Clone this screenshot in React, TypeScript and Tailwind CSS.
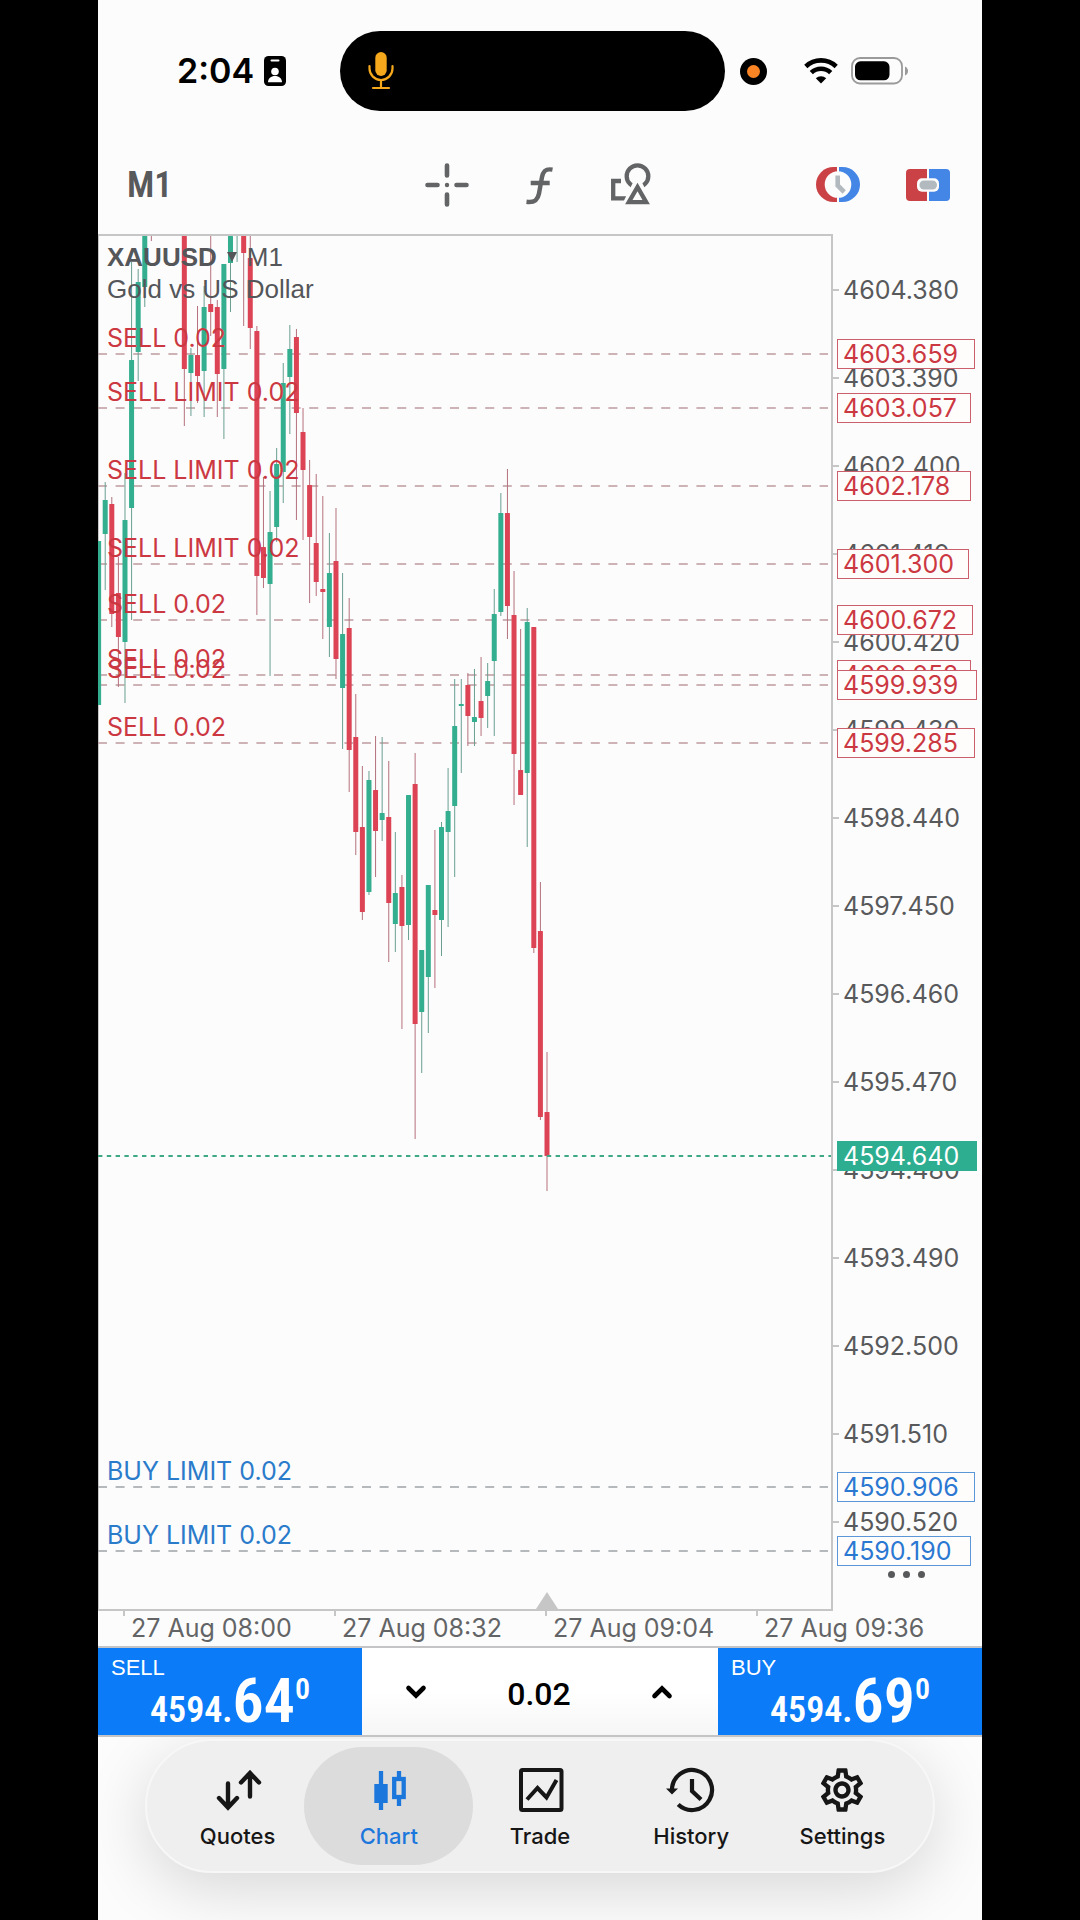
import { useState } from 'react';
import type { ReactNode } from 'react';
import { MdOutlineSettings } from 'react-icons/md';
import clsx from 'clsx';

type Candle = {
  high: number;
  top: number;
  bottom: number;
  low: number;
  up: boolean;
};

// bars from the newest to the oldest: [high, top, bottom, low, rising]
const rows: ([number, number, number, number, number] | null)[] = [
  [1052, 1112, 1156, 1191, 0],
  [882, 931, 1117, 1120, 0],
  [627, 627, 948, 953, 0],
  [608, 622, 773, 847, 1],
  [629, 770, 795, 795, 0],
  [571, 615, 754, 805, 0],
  [469, 513, 606, 639, 0],
  [493, 513, 612, 616, 1],
  [589, 614, 661, 736, 1],
  [663, 681, 696, 728, 1],
  [657, 701, 718, 736, 0],
  [669, 717, 722, 746, 1],
  [673, 685, 716, 746, 0],
  [679, 704, 706, 773, 1],
  [679, 726, 806, 877, 1],
  [768, 811, 832, 927, 1],
  [822, 827, 920, 956, 1],
  [830, 910, 915, 988, 0],
  [885, 885, 977, 1033, 1],
  [950, 950, 1012, 1073, 1],
  [753, 784, 1024, 1139, 0],
  [795, 795, 925, 940, 1],
  [875, 887, 926, 1029, 0],
  [832, 893, 924, 952, 1],
  [761, 817, 903, 962, 0],
  [737, 813, 820, 841, 1],
  [736, 790, 831, 877, 0],
  [771, 780, 892, 895, 1],
  [766, 827, 912, 920, 0],
  [694, 737, 832, 855, 0],
  [598, 628, 750, 792, 0],
  [573, 634, 688, 749, 1],
  [508, 561, 659, 679, 0],
  [533, 573, 627, 657, 1],
  [496, 589, 592, 639, 0],
  [474, 543, 582, 596, 0],
  [460, 485, 537, 603, 0],
  [408, 432, 470, 540, 0],
  [329, 337, 413, 520, 0],
  [325, 349, 377, 434, 1],
  [363, 383, 472, 503, 1],
  [448, 464, 527, 542, 1],
  [491, 532, 584, 676, 1],
  [477, 547, 578, 588, 0],
  [326, 331, 576, 615, 0],
  [236, 258, 328, 349, 0],
  [236, 236, 253, 326, 0],
  [236, 236, 236, 262, 1],
  [236, 236, 263, 312, 1],
  [264, 264, 369, 439, 1],
  [300, 307, 374, 417, 0],
  [236, 304, 312, 336, 0],
  [286, 307, 371, 417, 1],
  [306, 355, 376, 403, 0],
  [348, 355, 373, 416, 1],
  [236, 236, 369, 426, 0],
  null,
  null,
  null,
  null,
  [236, 236, 236, 241, 0],
  [236, 236, 287, 307, 1],
  [269, 282, 352, 381, 1],
  [262, 360, 508, 620, 1],
  [473, 520, 642, 703, 1],
  [557, 593, 637, 687, 0],
  [497, 504, 614, 627, 0],
  [482, 500, 534, 590, 1],
  [541, 541, 705, 705, 1],
];

const candles: (Candle | null)[] = rows.map(
  (r) => r && { high: r[0], top: r[1], bottom: r[2], low: r[3], up: r[4] === 1 }
);

const orders = [
  { price: 4603.659, label: 'SELL 0.02', side: 'sell', width: 137 },
  { price: 4603.057, label: 'SELL LIMIT 0.02', side: 'sell', width: 133 },
  { price: 4602.178, label: 'SELL LIMIT 0.02', side: 'sell', width: 133 },
  { price: 4601.3, label: 'SELL LIMIT 0.02', side: 'sell', width: 131 },
  { price: 4600.672, label: 'SELL 0.02', side: 'sell', width: 135 },
  { price: 4600.052, label: 'SELL 0.02', side: 'sell', width: 133 },
  { price: 4599.939, label: 'SELL 0.02', side: 'sell', width: 139 },
  { price: 4599.285, label: 'SELL 0.02', side: 'sell', width: 137 },
  { price: 4590.906, label: 'BUY LIMIT 0.02', side: 'buy', width: 137 },
  { price: 4590.19, label: 'BUY LIMIT 0.02', side: 'buy', width: 133 },
];

const gridPrices = Array.from({ length: 15 }, (_, i) => 4604.38 - i * 0.99);

const times = [
  { x: 124, label: '27 Aug 08:00' },
  { x: 335, label: '27 Aug 08:32' },
  { x: 546, label: '27 Aug 09:04' },
  { x: 757, label: '27 Aug 09:36' },
];

const LAST_PRICE = 4594.64;

const priceY = (price: number) => Math.round(290 + (4604.38 - price) * 88.87);
const candleX = (index: number) => 547 - index * 6.594;

const StatusBar = () => (
  <div className="grid grid-cols-[242fr_385fr_257fr] items-center pt-[31px] pb-6">
    <div className="flex items-center gap-2.5 pl-[79px]">
      <span className="text-[34px] leading-10 font-semibold text-black">2:04</span>
      <svg viewBox="0 0 22 30" className="h-[30px] w-[22px] shrink-0" aria-hidden="true">
        <rect width="22" height="30" rx="4.5" fill="#000" />
        <rect x="6.5" y="3.4" width="9" height="2.2" rx="1.1" fill="#fff" />
        <circle cx="11" cy="15.5" r="3.8" fill="#fff" />
        <path d="M4 26.3c0-4 3-6.3 7-6.3s7 2.3 7 6.3z" fill="#fff" />
      </svg>
    </div>
    <div className="flex h-20 items-center rounded-full bg-black pl-7">
      <svg viewBox="0 0 28 40" className="h-10 w-7" fill="none" stroke="#f5a81c" aria-hidden="true">
        <rect x="7.3" y="1" width="11.4" height="24" rx="5.7" fill="#f5a81c" stroke="none" />
        <path
          d="M1.5 15v2.5a11.5 11.5 0 0 0 23 0V15M13 29v7.5M5 37h16"
          strokeWidth="2.2"
          strokeLinecap="round"
        />
      </svg>
    </div>
    <div className="flex items-center pl-[15px]">
      <span className="flex size-[27px] items-center justify-center rounded-full bg-black">
        <span className="size-[13px] rounded-full bg-[#fb8524]" />
      </span>
      <svg
        viewBox="0 0 34 26"
        className="ml-[37px] h-[26px] w-[34px]"
        fill="none"
        stroke="#000"
        aria-hidden="true"
      >
        <path d="M1.8 8.5a22 22 0 0 1 30.4 0" strokeWidth="4.6" />
        <path d="M7.3 14.6a14 14 0 0 1 19.4 0" strokeWidth="4.6" />
        <path d="M11.8 20.2a7.6 7.6 0 0 1 10.4 0L17 25.5z" fill="#000" stroke="none" />
      </svg>
      <svg viewBox="0 0 58 28" className="ml-[13px] h-7 w-[58px]" aria-hidden="true">
        <rect x="1" y="1" width="50" height="25.5" rx="8" fill="none" stroke="#9a9a9a" strokeWidth="1.8" />
        <rect x="4" y="4.3" width="34.5" height="19" rx="5.5" fill="#000" />
        <path d="M54 9.5c2 1 3 2.5 3 4.5s-1 3.5-3 4.5z" fill="#9a9a9a" />
      </svg>
    </div>
  </div>
);

const Toolbar = () => (
  <div className="grid h-[99px] grid-cols-[1fr_auto_1fr] items-center pr-8 pl-[29px]">
    <button className="justify-self-start font-['Liberation_Sans_Narrow','Roboto_Condensed','Roboto',sans-serif] text-4xl font-semibold text-[#58595b]">
      M1
    </button>
    <div className="flex items-center gap-12 text-[#636466]">
      <button aria-label="Crosshair">
        <svg
          viewBox="0 0 44 44"
          className="size-11"
          stroke="currentColor"
          strokeWidth="4.6"
          strokeLinecap="round"
        >
          <path d="M22 2.5v10M22 31.5v10M2.5 22h10M31.5 22h10" />
          <circle cx="22" cy="22" r="2.2" fill="currentColor" stroke="none" />
        </svg>
      </button>
      <button aria-label="Indicators">
        <svg viewBox="0 0 44 44" className="size-11" fill="none" stroke="currentColor" strokeWidth="4.4">
          <path d="M35.5 6.6c-6.5-1.200-9.3 1-10.5 7.4l-3 16.5c-1.2 6.5-4.5 9.3-12.5 8.3M13.7 20h19" />
        </svg>
      </button>
      <button aria-label="Objects">
        <svg viewBox="0 0 44 44" className="size-11" fill="none" stroke="currentColor" strokeWidth="4.3">
          <path d="M12 18H4.2v17.3H17" />
          <circle cx="28.5" cy="13.2" r="10.8" />
          <path d="M28.5 15l-13 26h26z" fill="#fcfcfc" stroke="#fcfcfc" strokeWidth="4" />
          <path d="M28.5 24l-8.7 15.2h17.4z" />
        </svg>
      </button>
    </div>
    <div className="flex items-center gap-[46px] justify-self-end">
      <button aria-label="Tick chart">
        <svg viewBox="0 0 44 35" className="h-[35px] w-11">
          <path d="M21 0h-3.5a17.5 17.5 0 0 0 0 35H21z" fill="#cb4246" />
          <path d="M23 0h3.5a17.5 17.5 0 0 1 0 35H23z" fill="#4386e6" />
          <circle cx="22" cy="17.5" r="13.3" fill="#fcfcfc" />
          <path d="M21.7 8.5v10l6.5 6.5" fill="none" stroke="#b3babf" strokeWidth="4.6" />
        </svg>
      </button>
      <button aria-label="One click trading">
        <svg viewBox="0 0 44 32" className="h-8 w-11">
          <path d="M21 0H4a4 4 0 0 0-4 4v24a4 4 0 0 0 4 4h17z" fill="#cb4246" />
          <path d="M23 0h17a4 4 0 0 1 4 4v24a4 4 0 0 1-4 4H23z" fill="#4386e6" />
          <rect x="11" y="9.3" width="22" height="13.4" rx="5" fill="#fcfcfc" />
          <rect x="13.5" y="11.5" width="17.5" height="9" rx="4.5" fill="#b3babf" />
        </svg>
      </button>
    </div>
  </div>
);

const PriceChart = () => (
  <div className="relative">
    <svg viewBox="98 234 884 1412" className="block w-full" role="img" aria-label="XAUUSD M1 chart">
      {/* Frame */}
      <path d="M98 235H832V1610H98" fill="none" stroke="#c6c6c6" strokeWidth="2" />
      <path d="M98.5 235V1610" stroke="#c6c6c6" strokeWidth="1" />
      <path d="M547 1592l11 17h-22z" fill="#c6c6c6" />

      {/* Order lines */}
      {orders.map((order) => (
        <path
          key={order.price}
          d={`M98 ${priceY(order.price)}H828`}
          stroke={order.side === 'sell' ? '#be9a9e' : '#9ea3a6'}
          strokeWidth="1.3"
          strokeDasharray="9 8.6"
        />
      ))}

      {/* Candles */}
      {candles.map((candle, i) => {
        if (!candle) return null;
        const x = candleX(i);
        return (
          <g key={i}>
            <rect
              x={x - 0.5}
              y={candle.high}
              width="1"
              height={candle.low - candle.high}
              fill={candle.up ? '#6a9f92' : '#b5717d'}
            />
            <rect
              x={x - 2.5}
              y={candle.top}
              width="5"
              height={candle.bottom - candle.top}
              rx="0.5"
              fill={candle.up ? '#33ae8f' : '#dc4354'}
            />
          </g>
        );
      })}

      <path
        d={`M98 ${priceY(LAST_PRICE)}H831`}
        stroke="#3fa886"
        strokeWidth="2"
        strokeDasharray="4.4 4.4"
      />

      {/* Order labels */}
      {orders.map((order) => (
        <text
          key={order.price}
          x="107"
          y={priceY(order.price) - 7}
          className={clsx('text-[25px]', order.side === 'sell' ? 'fill-[#cc3842]' : 'fill-[#2b7bcb]')}
        >
          {order.label}
        </text>
      ))}

      {/* Price axis */}
      {gridPrices.map((price) => (
        <g key={price}>
          <path d={`M833 ${priceY(price)}h6`} stroke="#c6c6c6" strokeWidth="2" />
          <text x="843" y={priceY(price) + 9} className="fill-[#58595b] text-[25px]">
            {price.toFixed(3)}
          </text>
        </g>
      ))}
      {orders.map((order) => (
        <g key={order.price}>
          <rect
            x="837.5"
            y={priceY(order.price) - 14.5}
            width={order.width}
            height="29"
            fill="#fffdfb"
            stroke={order.side === 'sell' ? '#cb5f6b' : '#5b97d8'}
          />
          <text
            x="843"
            y={priceY(order.price) + 9}
            className={clsx('text-[25px]', order.side === 'sell' ? 'fill-[#cc3842]' : 'fill-[#2b78d2]')}
          >
            {order.price.toFixed(3)}
          </text>
        </g>
      ))}
      <rect x="837" y={priceY(LAST_PRICE) - 15} width="140" height="30" fill="#2dae90" />
      <text x="843" y={priceY(LAST_PRICE) + 9} className="fill-white text-[25px]">
        {LAST_PRICE.toFixed(3)}
      </text>

      {/* Time axis */}
      {times.map((time) => (
        <g key={time.label}>
          <path d={`M${time.x} 1611v5`} stroke="#c6c6c6" strokeWidth="2" />
          <text x={time.x + 7} y="1637" className="fill-[#636466] text-[25px]">
            {time.label}
          </text>
        </g>
      ))}
    </svg>

    {/* Symbol */}
    <div className="absolute top-[7px] left-[9px] font-['Liberation_Sans',sans-serif] text-[26px] leading-8 text-[#54565a]">
      <button className="flex items-center">
        <span className="font-bold">XAUUSD</span>
        <svg viewBox="0 0 10 10" className="mx-2.5 size-2.5" fill="currentColor" aria-hidden="true">
          <path d="M0 0h10L5 10z" />
        </svg>
        <span>M1</span>
      </button>
      <p>Gold vs US Dollar</p>
    </div>

    <button className="absolute right-[53px] bottom-16 flex gap-2 p-1" aria-label="More">
      <span className="size-[7px] rounded-full bg-[#58595b]" />
      <span className="size-[7px] rounded-full bg-[#58595b]" />
      <span className="size-[7px] rounded-full bg-[#58595b]" />
    </button>
  </div>
);

type DealButtonProps = { label: string; base: string; big: string; sup: string };

const DealButton = ({ label, base, big, sup }: DealButtonProps) => (
  <button className="relative flex h-full items-end justify-center bg-[#0b7bf7] text-white">
    <span className="absolute top-2 left-[13px] font-['Liberation_Sans',sans-serif] text-[22px] leading-6">
      {label}
    </span>
    <span className="flex items-baseline pb-1.5 font-['Liberation_Sans_Narrow','Roboto_Condensed','Roboto',sans-serif] font-semibold">
      <span className="text-4xl leading-none">{base}</span>
      <span className="text-[62px] leading-[56px]">{big}</span>
      <span className="self-start text-3xl leading-8">{sup}</span>
    </span>
  </button>
);

const TradePanel = () => {
  const [volume, setVolume] = useState('0.02');

  const step = (delta: number) => {
    setVolume(Math.max(0.01, Number(volume) + delta).toFixed(2));
  };

  return (
    <div className="grid h-[91px] grid-cols-[264fr_356fr_264fr] border-y-2 border-[#c4c4c6]">
      <DealButton label="SELL" base="4594." big="64" sup="0" />
      <div className="flex items-center justify-between bg-gradient-to-b from-white from-50% to-[#f6f6f6] pr-11 pl-[42px]">
        <button aria-label="Decrease volume" onClick={() => step(-0.01)}>
          <svg
            viewBox="0 0 24 24"
            className="size-6"
            fill="none"
            stroke="#000"
            strokeWidth="4.6"
            strokeLinecap="round"
          >
            <path d="M4.5 8l7.5 7.5L19.5 8" />
          </svg>
        </button>
        <input
          aria-label="Volume"
          className="w-32 bg-transparent pt-1 text-center font-['Roboto',sans-serif] text-[32px] leading-9 font-medium text-black outline-none"
          value={volume}
          onChange={(e) => setVolume(e.target.value)}
        />
        <button aria-label="Increase volume" onClick={() => step(0.01)}>
          <svg
            viewBox="0 0 24 24"
            className="size-6"
            fill="none"
            stroke="#000"
            strokeWidth="4.6"
            strokeLinecap="round"
          >
            <path d="M4.5 16L12 8.5l7.5 7.5" />
          </svg>
        </button>
      </div>
      <DealButton label="BUY" base="4594." big="69" sup="0" />
    </div>
  );
};

const tabs: { name: string; icon: ReactNode }[] = [
  {
    name: 'Quotes',
    icon: (
      <svg
        viewBox="0 0 50 50"
        className="size-[50px]"
        fill="none"
        stroke="currentColor"
        strokeWidth="4.4"
        strokeLinecap="round"
      >
        <path d="M15 18.5V42M6 33l9 9.5L24 33M37 31.5V8M28 17.5L37 8l9 9.5" />
      </svg>
    ),
  },
  {
    name: 'Chart',
    icon: (
      <svg viewBox="0 0 50 50" className="size-[50px]" fill="none" stroke="currentColor" strokeWidth="4.3">
        <path d="M17 6v39" />
        <rect x="10.3" y="19" width="13.4" height="19" fill="currentColor" stroke="none" />
        <path d="M35 6v7M35 33v8" />
        <rect x="30.2" y="14" width="9.5" height="18" />
      </svg>
    ),
  },
  {
    name: 'Trade',
    icon: (
      <svg viewBox="0 0 50 50" className="size-[50px]" fill="none" stroke="currentColor" strokeWidth="4">
        <rect x="6" y="5" width="40.5" height="40" rx="1.5" />
        <path d="M12 34.5L22.5 23l9 9.5L41.5 15" />
      </svg>
    ),
  },
  {
    name: 'History',
    icon: (
      <svg viewBox="0 0 50 50" className="size-[50px]" fill="none" stroke="currentColor" strokeWidth="4.2">
        <path d="M6 25a20 20 0 1 1 6.2 14.5M26 14v12l9 8.5" />
        <path d="M0 23.5h12L6 29.5z" fill="currentColor" stroke="none" />
      </svg>
    ),
  },
  { name: 'Settings', icon: <MdOutlineSettings className="size-[52px] -m-px" /> },
];

const TabBar = () => {
  const [active, setActive] = useState('Chart');

  return (
    <div className="flex-1 overflow-hidden px-[47px] pt-0.5 pb-11">
      <nav className="grid grid-cols-5 rounded-full border-2 border-[#f7f7f7] bg-[#efefef] px-[15px] py-1.5 shadow-[0_16px_64px_rgba(0,0,0,0.15)]">
        {tabs.map((tab) => (
          <button
            key={tab.name}
            onClick={() => setActive(tab.name)}
            className={clsx(
              '-mx-[9px] flex flex-col items-center gap-[7px] rounded-full pt-[18px] pb-[15px]',
              active === tab.name ? 'bg-[#dcdcdc] text-[#1c77dc]' : 'text-[#161616]'
            )}
          >
            {tab.icon}
            <span className="text-[22px] leading-7 font-medium">{tab.name}</span>
          </button>
        ))}
      </nav>
    </div>
  );
};

const App = () => (
  <div className="min-h-screen bg-black px-[98px]">
    <div className="flex min-h-screen flex-col bg-[#fcfcfc] font-['Inter',sans-serif]">
      <StatusBar />
      <Toolbar />
      <PriceChart />
      <TradePanel />
      <TabBar />
    </div>
  </div>
);

export default App;
